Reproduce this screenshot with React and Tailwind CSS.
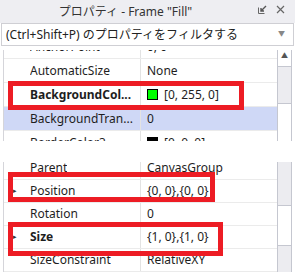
import React from "react";

const font = { fontFamily: '"Noto Sans", "Noto Sans CJK JP", sans-serif' };

function Row({ name, value, bold, selected, expand, h = "h-[24px]" }) {
  return (
    <div
      className={`flex ${h} border-b border-[#ebebeb] ${selected ? "bg-[#cfd8f6]" : "bg-white"}`}
    >
      <div className="w-[137px] shrink-0 flex items-center border-r border-[#e3e3e3] relative pl-[26px]">
        {expand && (
          <span className="absolute left-[9px] text-[7px] text-[#333]">▸</span>
        )}
        <span className={`truncate ${bold ? "font-bold" : ""}`}>{name}</span>
      </div>
      <div className="flex-1 flex items-center pl-[6px] whitespace-nowrap">{value}</div>
    </div>
  );
}

function Swatch({ color }) {
  return (
    <span className="inline-flex items-center gap-[6px]">
      <span
        className={`w-[11px] h-[11px] border border-black ${color}`}
      />
    </span>
  );
}

function Scrollbar({ children }) {
  return (
    <div className="w-[15px] shrink-0 border-l border-r border-[#c5c7d0] flex flex-col bg-[#ececf0]">
      {children}
    </div>
  );
}

export default function App() {
  return (
    <div
      className="w-[295px] h-[272px] bg-white text-[12px] text-[#1e1e1e] overflow-hidden"
      style={font}
    >
      {/* title bar */}
      <div className="h-[23px] bg-[#eeeef2] flex items-center relative">
        <div className="flex-1 text-center pr-[44px] text-[#333]">プロパティ - Frame "Fill"</div>
        <div className="absolute right-[10px] top-[5px] flex items-center gap-[9px] text-[#666]">
          <svg width="9" height="9" viewBox="0 0 9 9">
            <path d="M0.5 2.5 V8.5 H6.5" fill="none" stroke="#666" strokeWidth="1" />
            <path d="M8 1 L3.5 5.5 M3 3 V6 H6" fill="none" stroke="#555" strokeWidth="1.4" />
          </svg>
          <svg width="9" height="9" viewBox="0 0 9 9">
            <path d="M1 1 L8 8 M8 1 L1 8" stroke="#666" strokeWidth="1.2" />
          </svg>
        </div>
      </div>

      {/* filter */}
      <div className="h-[23px] mx-[1px] border border-[#cfcfd4] bg-white flex items-center pl-[4px] pr-[8px]">
        <span className="flex-1 text-[#222]">(Ctrl+Shift+P) のプロパティをフィルタする</span>
        <span className="text-[7px] text-[#888]">▼</span>
      </div>

      {/* panel 1 */}
      <div className="mt-[4px] h-[91px] flex relative">
        <div className="w-[3px] shrink-0 bg-white" />
        <div className="flex-1 border-l border-[#d5d5da] overflow-hidden">
          <div className="-mt-[15px]">
            <Row name="AnchorPoint" value="0, 0" />
            <Row name="AutomaticSize" value="None" />
            <Row
              name="BackgroundCol..."
              bold
              value={
                <span className="flex items-center gap-[6px]">
                  <Swatch color="bg-[#00ff00]" />
                  [0, 255, 0]
                </span>
              }
            />
            <Row name="BackgroundTran..." value="0" selected />
            <Row
              name="BorderColor3"
              value={
                <span className="flex items-center gap-[6px]">
                  <Swatch color="bg-black" />
                  [0, 0, 0]
                </span>
              }
            />
          </div>
        </div>
        <Scrollbar>
          <div className="h-[17px] bg-white border-b border-[#c5c7d0] flex items-start justify-center">
            <span className="text-[7px] leading-[12px] text-[#555]">▲</span>
          </div>
          <div className="h-[36px]" />
          <div className="flex-1 bg-white border-t border-[#c5c7d0]" />
        </Scrollbar>
        <div className="w-[3px] shrink-0" />
        <div className="absolute left-[8px] top-[31px] w-[236px] h-[29px] border-[5px] border-[#ed1c24]" />
      </div>

      {/* panel 2 */}
      <div className="mt-[21px] h-[110px] flex relative">
        <div className="w-[3px] shrink-0 bg-white" />
        <div className="flex-1 border-l border-[#d5d5da] overflow-hidden">
          <div className="-mt-[5px]">
            <Row h="h-[23px]" name="Parent" value="CanvasGroup" />
            <Row h="h-[23px]" name="Position" value="{0, 0},{0, 0}" expand />
            <Row h="h-[23px]" name="Rotation" value="0" />
            <Row h="h-[23px]" name="Size" value="{1, 0},{1, 0}" expand bold />
            <Row h="h-[23px]" name="SizeConstraint" value="RelativeXY" />
          </div>
        </div>
        <Scrollbar>
          <div className="h-[43px]" />
          <div className="h-[41px] bg-white border-t border-b border-[#c5c7d0]" />
          <div className="flex-1" />
        </Scrollbar>
        <div className="w-[3px] shrink-0" />
        <div className="absolute left-[8px] top-[10px] w-[207px] h-[30px] border-[5px] border-[#ed1c24]" />
        <div className="absolute left-[8px] top-[60px] w-[215px] h-[34px] border-[5px] border-[#ed1c24]" />
      </div>
    </div>
  );
}
